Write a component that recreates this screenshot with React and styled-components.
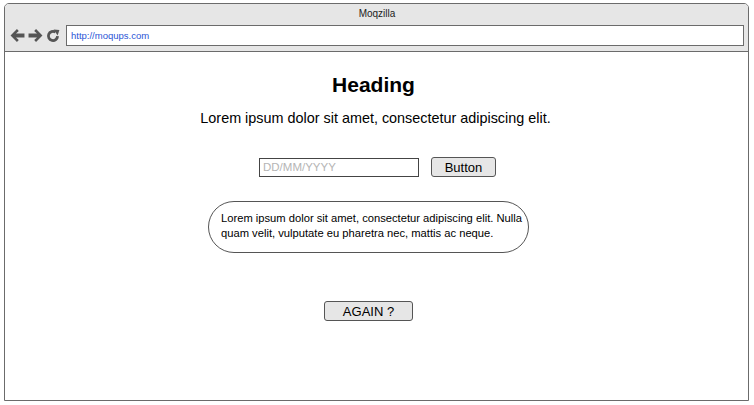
import React from "react";
import styled, { createGlobalStyle } from "styled-components";

const GlobalStyle = createGlobalStyle`
  html, body {
    margin: 0;
    padding: 0;
    background: #ffffff;
    font-family: "Liberation Sans", Arial, sans-serif;
  }
`;

const Page = styled.div`
  width: 754px;
  height: 405px;
  padding: 3px 5px 4px 4px;
  box-sizing: border-box;
`;

const Window = styled.div`
  height: 100%;
  display: flex;
  flex-direction: column;
  border: 1px solid #6b6b6b;
  border-radius: 5px 5px 0 0;
  overflow: hidden;
  box-sizing: border-box;
`;

const TitleBar = styled.div`
  background: #e6e6e6;
  border-bottom: 1px solid #6b6b6b;
  display: flex;
  flex-direction: column;
  padding: 4px 4px 5px 5px;
`;

const Title = styled.div`
  text-align: center;
  font-size: 10px;
  color: #222;
  height: 12px;
  line-height: 12px;
`;

const NavRow = styled.div`
  display: flex;
  align-items: center;
  margin-top: 5px;
`;

const NavIcons = styled.div`
  display: flex;
  align-items: center;
  gap: 3px;
  width: 56px;
  color: #555;
`;

const Address = styled.div`
  flex: 1;
  height: 21px;
  background: #fff;
  border: 1px solid #6b6b6b;
  box-sizing: border-box;
  display: flex;
  align-items: center;
  padding-left: 4px;
  font-size: 9.5px;
  color: #2a55d6;
`;

const Content = styled.div`
  flex: 1;
  display: flex;
  flex-direction: column;
  align-items: center;
  background: #fff;
`;

const Heading = styled.h1`
  margin: 21px 0 0;
  font-size: 21px;
  font-weight: bold;
  color: #000;
  line-height: 24px;
  transform: translateX(-3px);
`;

const Lead = styled.p`
  margin: 12px 0 0;
  font-size: 14.4px;
  line-height: 18px;
  color: #000;
  transform: translateX(-1px);
`;

const FormRow = styled.div`
  display: flex;
  align-items: center;
  gap: 12px;
  margin-top: 30px;
  transform: translateX(1px);
`;

const DateInput = styled.input`
  width: 160px;
  height: 19px;
  box-sizing: border-box;
  border: 1px solid #444;
  padding: 0 3px;
  font-family: "Liberation Sans", Arial, sans-serif;
  font-size: 11.5px;
  outline: none;
  &::placeholder {
    color: #b5b5b5;
  }
`;

const Button = styled.button`
  width: ${(p) => p.$w}px;
  height: 20px;
  box-sizing: border-box;
  border: 1px solid #555;
  border-radius: 3px;
  background: #e6e6e6;
  font-family: "Liberation Sans", Arial, sans-serif;
  font-size: 13px;
  color: #000;
  padding: 0;
  cursor: pointer;
`;

const Bubble = styled.div`
  margin-top: 24px;
  width: 321px;
  height: 52px;
  box-sizing: border-box;
  border: 1px solid #555;
  border-radius: 26px;
  padding: 9px 0 0 12px;
  font-size: 11.2px;
  line-height: 15px;
  color: #000;
  transform: translateX(-8px);
`;

const Footer = styled.div`
  margin-top: 48px;
  transform: translateX(-8px);
`;

const Arrow = ({ flip }) => (
  <svg width="15" height="15" viewBox="0 0 14 14" style={flip ? { transform: "scaleX(-1)" } : undefined}>
    <path d="M0.5 7 L6.5 1 L8.2 2.7 L5.6 5.2 L13.5 5.2 L13.5 8.8 L5.6 8.8 L8.2 11.3 L6.5 13 Z" fill="#555" />
  </svg>
);

const Reload = () => (
  <svg width="14" height="14" viewBox="0 0 14 14">
    <path
      d="M11.6 7.2 A4.6 4.6 0 1 1 9.4 3"
      fill="none"
      stroke="#555"
      strokeWidth="2.8"
    />
    <path d="M7.6 0.4 L13.4 1 L11.6 6.4 Z" fill="#555" />
  </svg>
);

export default function App() {
  return (
    <>
      <GlobalStyle />
      <Page>
        <Window>
          <TitleBar>
            <Title>Moqzilla</Title>
            <NavRow>
              <NavIcons>
                <Arrow />
                <Arrow flip />
                <Reload />
              </NavIcons>
              <Address>http://moqups.com</Address>
            </NavRow>
          </TitleBar>
          <Content>
            <Heading>Heading</Heading>
            <Lead>Lorem ipsum dolor sit amet, consectetur adipiscing elit.</Lead>
            <FormRow>
              <DateInput placeholder="DD/MM/YYYY" />
              <Button $w={65}>Button</Button>
            </FormRow>
            <Bubble>
              Lorem ipsum dolor sit amet, consectetur adipiscing elit. Nulla
              <br />
              quam velit, vulputate eu pharetra nec, mattis ac neque.
            </Bubble>
            <Footer>
              <Button $w={89}>AGAIN ?</Button>
            </Footer>
          </Content>
        </Window>
      </Page>
    </>
  );
}
